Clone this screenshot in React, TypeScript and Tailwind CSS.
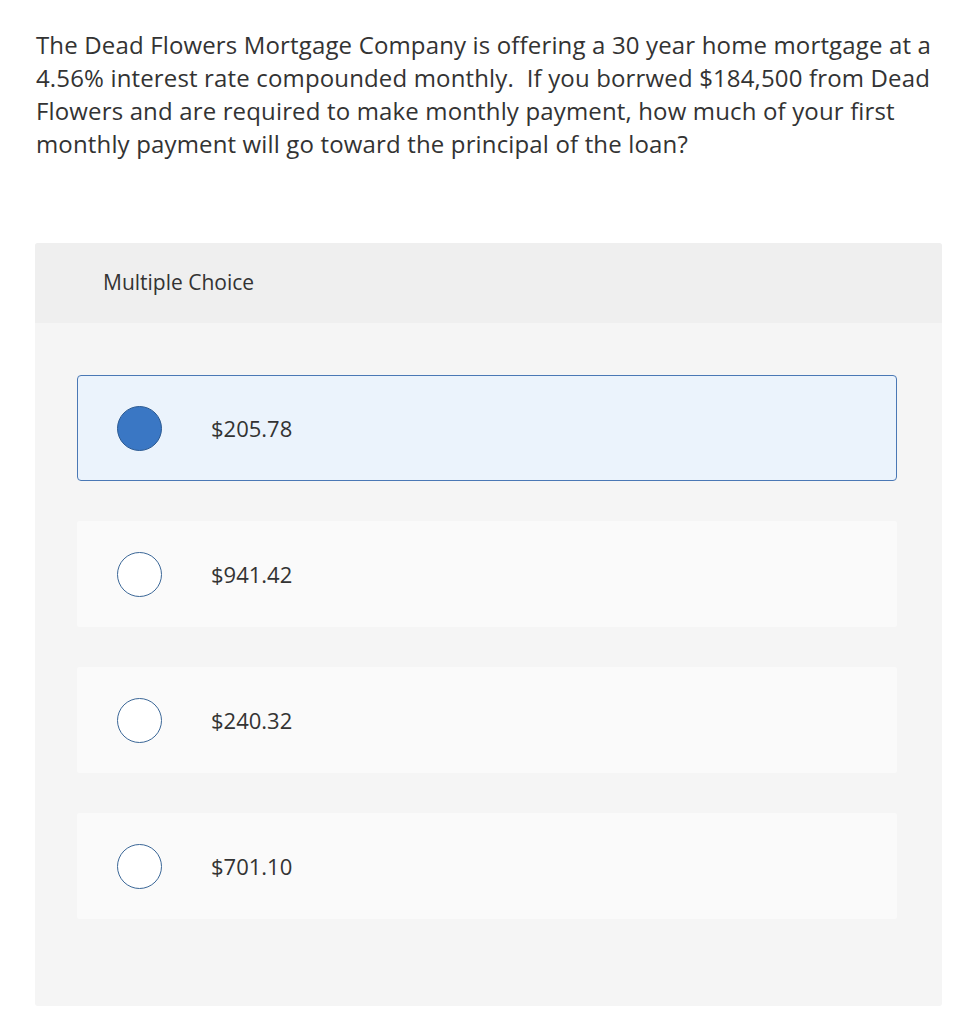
export default function App() {
  const options = ['$205.78', '$941.42', '$240.32', '$701.10'];
  const selected = 0;

  return (
    <div className="min-h-screen bg-white text-[#333] font-['Open_Sans',sans-serif]">
      <div className="px-[36px] pt-[28px]">
        <p className="text-[24px] leading-[33px] tracking-[0.15px] whitespace-nowrap">
          The Dead Flowers Mortgage Company is offering a 30 year home mortgage at a
          <br />
          4.56% interest rate compounded monthly.&nbsp; If you borrwed $184,500 from Dead
          <br />
          Flowers and are required to make monthly payment, how much of your first
          <br />
          monthly payment will go toward the principal of the loan?
        </p>
      </div>

      <div className="mx-[35px] mt-[83px] w-[907px] rounded-[3px] overflow-hidden bg-[#f5f5f5]">
        <div className="h-[80px] bg-[#efefef] flex items-center pl-[68px]">
          <span className="text-[21px] text-[#333]">Multiple Choice</span>
        </div>
        <div className="flex flex-col gap-[40px] pl-[42px] pr-[45px] pt-[52px] pb-[87px]">
          {options.map((opt, i) => (
            <div
              key={opt}
              className={
                i === selected
                  ? 'h-[106px] flex items-center rounded-[4px] border border-[#4a78b5] bg-[#ebf3fc] pl-[39px]'
                  : 'h-[106px] flex items-center rounded-[2px] bg-[#fafafa] pl-[40px]'
              }
            >
              {i === selected ? (
                <span className="w-[45px] h-[45px] rounded-full bg-[#3a77c4] border border-[#2c5a92] shrink-0" />
              ) : (
                <span className="w-[45px] h-[45px] rounded-full bg-white border-[1.5px] border-[#3b6797] shrink-0" />
              )}
              <span className="ml-[49px] text-[22px] text-[#333]">{opt}</span>
            </div>
          ))}
        </div>
      </div>
    </div>
  );
}
